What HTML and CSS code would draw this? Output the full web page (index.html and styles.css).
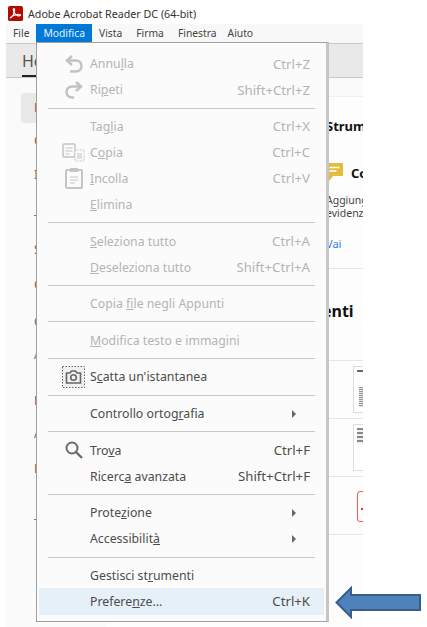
FILE: index.html
```html
<!doctype html>
<html lang="it">
  <head>
    <meta charset="UTF-8" />
    <meta name="viewport" content="width=device-width, initial-scale=1.0" />
    <title>Adobe Acrobat Reader DC (64-bit)</title>
    <link rel="stylesheet" href="styles.css">
  </head>
  <body>
    <div class="titlebar">
      <svg class="app-icon" viewBox="0 0 16 16">
        <rect width="16" height="16" rx="2" fill="#b30b00" />
        <path d="M2.6 12.6c1.6-.8 3.6-4.3 4.3-7.2.3-1.3.1-2.6-.6-2.6-.9 0-.8 2 .1 3.9.9 1.900 2.300 3.500 4.200 3.800 1.500.2 2.900-.1 2.800-.8-.1-.8-2.100-.8-4.200-.4-2.400.4-5 1.300-6.100 2.700-.5.600-.7 1-.5.600z" fill="none" stroke="#fff" stroke-width="1.3" />
      </svg>
      <span>Adobe Acrobat Reader DC (64-bit)</span>
    </div>

    <div class="window">
      <nav class="menubar">
        <span class="menubar-item">File</span>
        <span class="menubar-item active">Modifica</span>
        <span class="menubar-item">Vista</span>
        <span class="menubar-item">Firma</span>
        <span class="menubar-item">Finestra</span>
        <span class="menubar-item">Aiuto</span>
      </nav>

      <div class="tabs">
        <span class="tab">Home</span>
      </div>

      <div class="app-body">
        <aside class="sidebar">
          <div class="side-chip">Recenti</div>
          <ul class="side-list">
            <li>Con stella</li>
            <li>Il mio</li>
            <li>Tutti</li>
            <li>Scansioni</li>
            <li>Cloud</li>
            <li>Condivisi</li>
            <li>Account</li>
            <li>Risorse</li>
            <li>Altri</li>
            <li>Rivedi</li>
            <li>Tutti</li>
          </ul>
        </aside>

        <main class="content">
          <div class="content-top"></div>
          <section class="tools">
            <h2 class="tools-title">Strumenti</h2>
            <div class="tool-head">
              <svg class="comment-icon" viewBox="0 0 17 19">
                <path d="M1 0h15a1 1 0 0 1 1 1v11a1 1 0 0 1-1 1H7l-4 5v-5H1a1 1 0 0 1-1-1V1a1 1 0 0 1 1-1z" fill="#e3bd3a" />
                <path d="M3.500 4.500h10M3.500 8h7" stroke="#fff" stroke-width="1.5" />
              </svg>
              <span class="tool-name">Commento</span>
            </div>
            <p class="tool-text">Aggiungi note<br>evidenziazioni</p>
            <a class="tool-link">Vai</a>
          </section>

          <h2 class="docs-title">Documenti</h2>
          <div class="doc-row">
            <div class="thumb thumb-a"><i class="thumb-head"></i><i class="thumb-lines"></i></div>
          </div>
          <div class="doc-row">
            <div class="thumb thumb-b"><i class="thumb-lines"></i></div>
          </div>
          <div class="doc-row">
            <div class="file-badge"><i></i></div>
          </div>
        </main>
      </div>

      <div class="menu">
        <div class="item disabled">
          <span class="icon">
            <svg viewBox="0 0 18 18" width="18" height="18"><path d="M3 5.500h7.500c8 0 8 11 0 11H5" fill="none" stroke="#c2c2c2" stroke-width="2.500" /><path d="M7 1 2 5.500 7 10" fill="none" stroke="#c2c2c2" stroke-width="2.500" /></svg>
          </span>
          <span class="label">Annu<u>l</u>la</span><span class="key">Ctrl+Z</span>
        </div>
        <div class="item disabled">
          <span class="icon">
            <svg viewBox="0 0 18 18" width="18" height="18"><path d="M15 5.500H7.500c-8 0-8 11 0 11H9" fill="none" stroke="#c2c2c2" stroke-width="2.500" /><path d="M11 1l5 4.500L11 10" fill="none" stroke="#c2c2c2" stroke-width="2.500" /></svg>
          </span>
          <span class="label">Ri<u>p</u>eti</span><span class="key">Shift+Ctrl+Z</span>
        </div>
        <div class="sep"></div>
        <div class="item disabled">
          <span class="icon"></span>
          <span class="label">Tag<u>l</u>ia</span><span class="key">Ctrl+X</span>
        </div>
        <div class="item disabled">
          <span class="icon">
            <svg viewBox="0 0 23 19" width="23" height="19"><rect x="1" y="1" width="12" height="13" rx="1" fill="none" stroke="#c4c4c4" stroke-width="1.500" /><path d="M3.500 5h7M3.500 8h7M3.500 11h4" stroke="#c4c4c4" /><rect x="13" y="7" width="9" height="11" fill="#fbfbfb" stroke="#c4c4c4" stroke-dasharray="1.500 1" /><path d="M15 11h5M15 13h5M15 15h5" stroke="#c4c4c4" /></svg>
          </span>
          <span class="label">C<u>o</u>pia</span><span class="key">Ctrl+C</span>
        </div>
        <div class="item disabled">
          <span class="icon">
            <svg viewBox="0 0 18 22" width="18" height="22"><rect x="1" y="3" width="16" height="18" rx="1" fill="none" stroke="#c4c4c4" stroke-width="2" /><rect x="5" y="1" width="8" height="4" fill="#c4c4c4" /><path d="M5 10h8M5 13h8M5 16h5" stroke="#c4c4c4" /></svg>
          </span>
          <span class="label"><u>I</u>ncolla</span><span class="key">Ctrl+V</span>
        </div>
        <div class="item disabled">
          <span class="icon"></span>
          <span class="label"><u>E</u>limina</span>
        </div>
        <div class="sep"></div>
        <div class="item disabled">
          <span class="icon"></span>
          <span class="label"><u>S</u>eleziona tutto</span><span class="key">Ctrl+A</span>
        </div>
        <div class="item disabled">
          <span class="icon"></span>
          <span class="label"><u>D</u>eseleziona tutto</span><span class="key">Shift+Ctrl+A</span>
        </div>
        <div class="sep"></div>
        <div class="item disabled">
          <span class="icon"></span>
          <span class="label">Copia <u>f</u>ile negli Appunti</span>
        </div>
        <div class="sep"></div>
        <div class="item disabled">
          <span class="icon"></span>
          <span class="label"><u>M</u>odifica testo e immagini</span>
        </div>
        <div class="sep"></div>
        <div class="item">
          <span class="icon">
            <svg viewBox="0 0 23 22" width="23" height="22"><rect x=".5" y=".5" width="22" height="21" fill="#f1f1f1" stroke="#666" stroke-dasharray="1.500 1.500" /><path d="M4.500 7h3.500l1.500-2h4l1.500 2h3.500v10h-14z" fill="none" stroke="#666" stroke-width="1.6" /><circle cx="11.500" cy="11.500" r="2.800" fill="none" stroke="#666" stroke-width="1.6" /></svg>
          </span>
          <span class="label">S<u>c</u>atta un'istantanea</span>
        </div>
        <div class="sep"></div>
        <div class="item">
          <span class="icon"></span>
          <span class="label">Controllo ortog<u>r</u>afia</span><span class="more"></span>
        </div>
        <div class="sep"></div>
        <div class="item">
          <span class="icon">
            <svg viewBox="0 0 18 18" width="18" height="18"><circle cx="7" cy="7" r="5.500" fill="none" stroke="#6b6b6b" stroke-width="2" /><path d="M11 11l6 6" stroke="#6b6b6b" stroke-width="2.400" /></svg>
          </span>
          <span class="label">Tro<u>v</u>a</span><span class="key">Ctrl+F</span>
        </div>
        <div class="item">
          <span class="icon"></span>
          <span class="label">Ricerc<u>a</u> avanzata</span><span class="key">Shift+Ctrl+F</span>
        </div>
        <div class="sep"></div>
        <div class="item">
          <span class="icon"></span>
          <span class="label">Prote<u>z</u>ione</span><span class="more"></span>
        </div>
        <div class="item">
          <span class="icon"></span>
          <span class="label">Accessibilit<u>à</u></span><span class="more"></span>
        </div>
        <div class="sep"></div>
        <div class="item">
          <span class="icon"></span>
          <span class="label">Gestisci st<u>r</u>umenti</span>
        </div>
        <div class="item hover">
          <span class="icon"></span>
          <span class="label">Prefere<u>n</u>ze...</span><span class="key">Ctrl+K</span>
        </div>
      </div>
    </div>

    <svg class="pointer" viewBox="0 0 87 33" width="87" height="33">
      <path d="M1.500 16.500 16 2v7h69v15H16v7z" fill="#4f81bd" stroke="#385d8a" stroke-width="2" />
    </svg>
  </body>
</html>
```

FILE: styles.css
```css
* {
  box-sizing: border-box;
}
html,
body {
  margin: 0;
  height: 100%;
}
body {
  position: relative;
  width: 427px;
  height: 627px;
  overflow: hidden;
  background: #fff;
  font-family: "Noto Sans", "Open Sans", sans-serif;
  font-size: 12px;
  color: #444;
}

/* barra del titolo */
.titlebar {
  height: 24px;
  padding: 6px 0 0 8px;
  display: flex;
  align-items: flex-start;
  gap: 5px;
  font-size: 10.7px;
  color: #333;
  line-height: 16px;
}
.app-icon {
  width: 15px;
  height: 15px;
  flex: none;
}

.window {
  position: relative;
  width: 357px;
  height: 603px;
  margin-left: 6px;
  overflow: hidden;
  background: #fdfdfd;
}

/* menu principale */
.menubar {
  height: 19px;
  display: flex;
  background: #f8f8f8;
  font-size: 10.3px;
  line-height: 19px;
  color: #444;
}
.menubar-item {
  padding: 0 7px;
}
.menubar-item.active {
  background: #0078d7;
  color: #e4f1fb;
}
.menubar-item:last-child {
  margin-left: -3px;
}

.tabs {
  height: 35px;
  padding-left: 16px;
  background: #e9e9e9;
  border-top: 1px solid #c9c9c9;
  border-bottom: 1px solid #c9c9c9;
}
.tab {
  display: block;
  width: 40px;
  height: 33px;
  font-size: 16px;
  line-height: 34px;
  border-bottom: 2px solid #222;
  color: #555;
}

.app-body {
  display: flex;
  height: 549px;
}

/* colonna sinistra: quasi tutta nascosta dal menu */
.sidebar {
  flex: none;
  width: 100px;
  padding: 15px 0 0 15px;
  background: #fafafa;
  color: #76665c;
  font-size: 12px;
}
.side-chip {
  height: 30px;
  padding-left: 13px;
  line-height: 30px;
  background: #e8e8e8;
  border-radius: 4px;
}
.side-list {
  list-style: none;
  margin: 0;
  padding: 0 0 0 13px;
  display: grid;
  grid-template-rows: 34px 45px 30px 35px 37px 33px 46px 33px 35px 55px 28px;
}
.side-list li {
  line-height: 20px;
  white-space: nowrap;
  margin-top: 8px;
}

.content {
  flex: 1;
  min-width: 0;
  overflow: hidden;
  background: #fdfdfd;
}
.content-top {
  height: 19px;
  background: #fafafa;
  border-bottom: 1px solid #f0f0f0;
}
.tools {
  height: 172px;
  padding: 19px 0 0 220px;
  border-bottom: 1px solid #e6e6e6;
  white-space: nowrap;
}
.tools-title {
  margin: 0;
  font-size: 13px;
  line-height: 20px;
  color: #111;
}
.tool-head {
  display: flex;
  align-items: center;
  gap: 8px;
  margin-top: 27px;
}
.comment-icon {
  width: 17px;
  height: 19px;
  flex: none;
}
.tool-name {
  font-size: 13px;
  font-weight: bold;
  color: #111;
}
.tool-text {
  margin: 12px 0 0;
  font-size: 10.5px;
  line-height: 13px;
  color: #444;
}
.tool-link {
  display: block;
  margin-top: 16px;
  font-size: 11px;
  color: #2d7fe0;
}
.docs-title {
  height: 92px;
  margin: 0;
  padding: 29px 0 0 160px;
  font-size: 16px;
  font-weight: bold;
  line-height: 26px;
  color: #111;
  border-bottom: 1px solid #e6e6e6;
}
.doc-row {
  height: 58px;
  padding: 5px 0 0 247px;
  border-bottom: 1px solid #e6e6e6;
}
.thumb {
  position: relative;
  width: 60px;
  height: 47px;
  padding: 3px 0 0 3px;
  background: #fff;
  border: 1px solid #dcdcdc;
}
.thumb i {
  display: block;
}
.thumb-head {
  width: 8px;
  height: 2px;
  background: #666;
}
.thumb-lines {
  height: 20px;
  width: 10px;
  margin-left: 2px;
  background: repeating-linear-gradient(#999 0 1px, #e2e2e2 1px 2px);
}
.thumb-a .thumb-lines {
  margin-top: 15px;
}
.thumb-b .thumb-lines {
  height: 16px;
  margin-left: 0;
  background: repeating-linear-gradient(#888 0 2px, #eee 2px 4px);
}
.file-badge {
  width: 40px;
  height: 31px;
  margin: 9px 0 0 4px;
  border: 1px solid #ee5a55;
  border-radius: 3px;
}
.file-badge i {
  display: block;
  width: 2px;
  height: 2px;
  margin: 16px 0 0 3px;
  background: #e33;
}

/* menu a tendina aperto */
.menu {
  position: absolute;
  left: 30px;
  top: 18px;
  width: 293px;
  height: 580px;
  padding: 7.7px 2px 0;
  background: #fbfbfb;
  border: 1px solid #a0a0a0;
  border-right: 3px solid #c6c6c6;
}
.item {
  height: 26px;
  padding: 0 14px 0 23px;
  display: flex;
  align-items: center;
  white-space: nowrap;
  font-size: 12.3px;
  color: #4c4c4c;
}
.item.disabled {
  color: #b4b4b4;
}
.item.hover {
  background: #e6f0f9;
  height: 27px;
  margin-top: -0.7px;
}
.icon {
  flex: none;
  width: 23px;
  margin-right: 5px;
  display: flex;
  justify-content: center;
  align-items: center;
}
.icon svg {
  display: block;
}
.label {
  flex: 1;
}
.key {
  flex: none;
  font-size: 13.2px;
}
.more {
  flex: none;
  width: 0;
  height: 0;
  margin-right: 14px;
  border-left: 4px solid #666;
  border-top: 4px solid transparent;
  border-bottom: 4px solid transparent;
}
.sep {
  height: 10.67px;
  margin: 0 9px;
  display: flex;
  align-items: center;
}
.sep::before {
  content: "";
  flex: 1;
  height: 1px;
  background: #c8c8c8;
}

/* freccia aggiunta sopra lo screenshot */
.pointer {
  position: absolute;
  left: 335px;
  top: 586px;
}
```
